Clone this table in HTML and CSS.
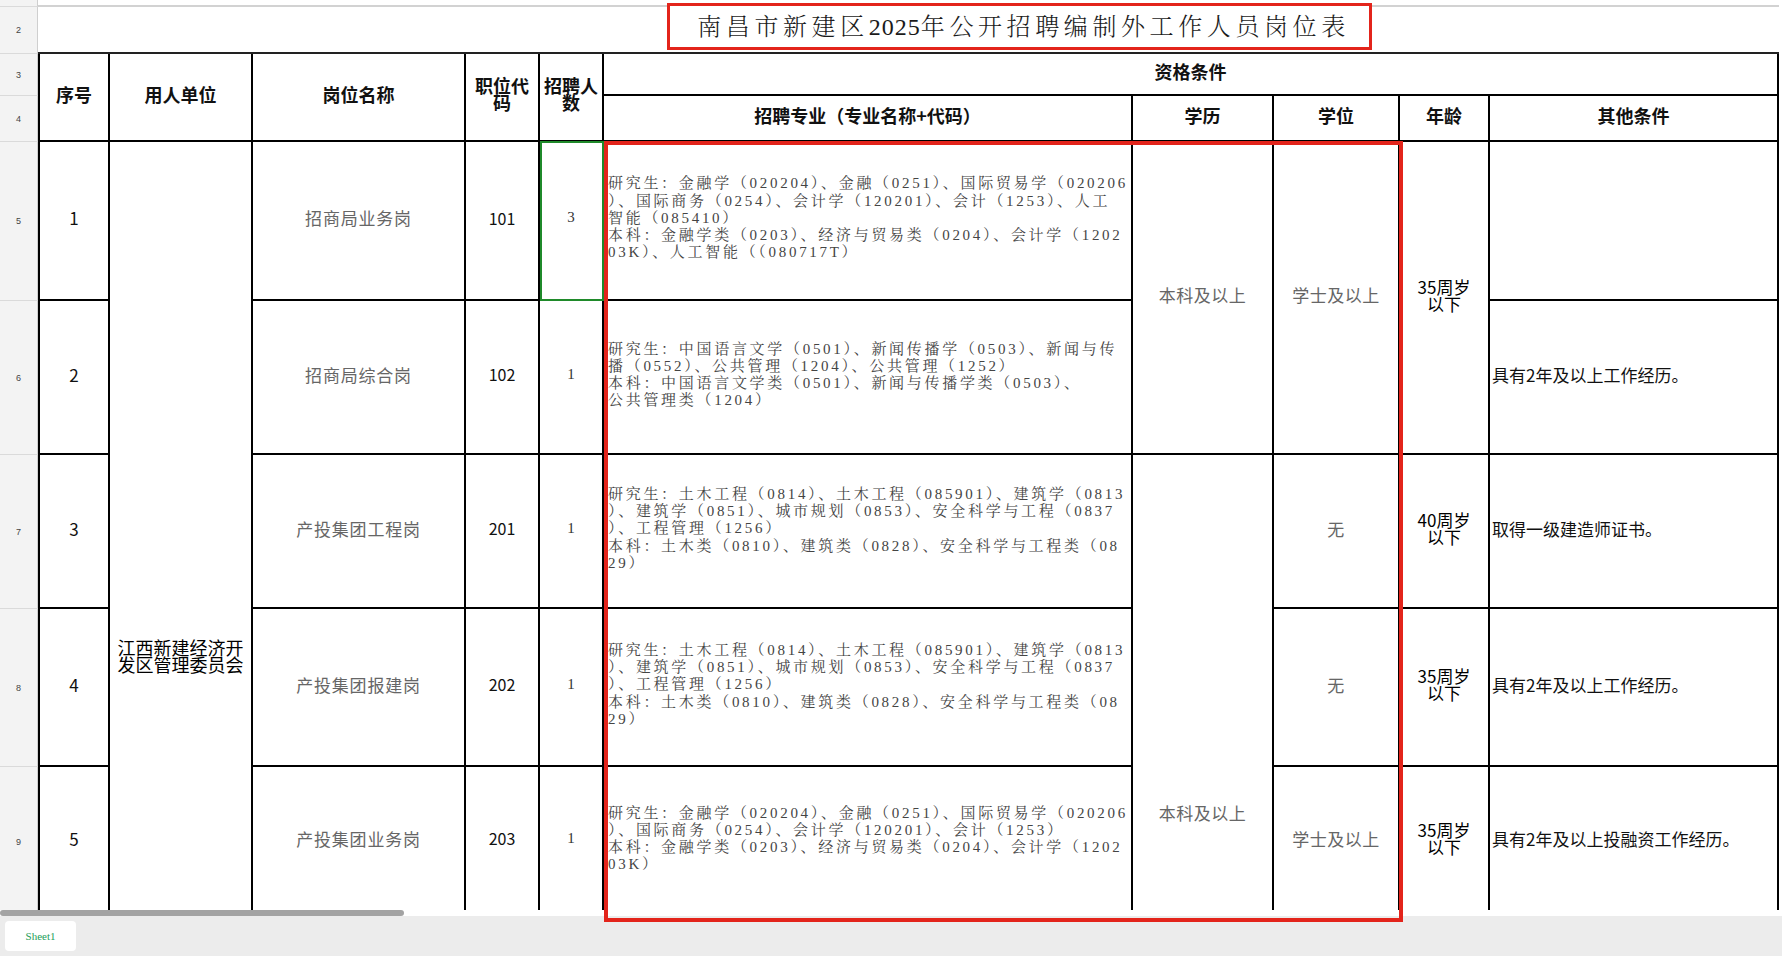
FILE: index.html
```html
<!DOCTYPE html>
<html lang="zh-CN">
<head>
<meta charset="utf-8">
<title>南昌市新建区2025年公开招聘编制外工作人员岗位表</title>
<link rel="stylesheet" href="styles.css">
</head>
<body>
<div class="app">
  <div class="sheet">
    <div class="grid">
      <div class="rh"></div>
      <div class="r1"></div>

      <div class="rh">2</div>
      <div class="title-cell">
        <div class="title-box"><span>南昌市新建区<span class="yr">2025</span>年公开招聘编制外工作人员岗位表</span></div>
      </div>

      <div class="rh">3</div>
      <div class="c hd h2 first">序号</div>
      <div class="c hd h2">用人单位</div>
      <div class="c hd h2">岗位名称</div>
      <div class="c hd h2">职位代<br>码</div>
      <div class="c hd h2">招聘人<br>数</div>
      <div class="c hd span5">资格条件</div>

      <div class="rh">4</div>
      <div class="c hd">招聘专业（专业名称+代码）</div>
      <div class="c hd">学历</div>
      <div class="c hd">学位</div>
      <div class="c hd">年龄</div>
      <div class="c hd">其他条件</div>

      <div class="rh">5</div>
      <div class="c first num">1</div>
      <div class="c unit">江西新建经济开<br>发区管理委员会</div>
      <div class="c post">招商局业务岗</div>
      <div class="c code">101</div>
      <div class="c cnt">3</div>
      <div class="c major">
        <div>研究生：金融学（020204）、金融（0251）、国际贸易学（020206</div>
        <div>）、国际商务（0254）、会计学（120201）、会计（1253）、人工</div>
        <div>智能（085410）</div>
        <div>本科：金融学类（0203）、经济与贸易类（0204）、会计学（1202</div>
        <div>03K）、人工智能（（080717T）</div>
      </div>
      <div class="c edu rs2">本科及以上</div>
      <div class="c edu rs2">学士及以上</div>
      <div class="c age rs2">35周岁<br>以下</div>
      <div class="c other"></div>

      <div class="rh">6</div>
      <div class="c first num">2</div>
      <div class="c post">招商局综合岗</div>
      <div class="c code">102</div>
      <div class="c cnt">1</div>
      <div class="c major">
        <div>研究生：中国语言文学（0501）、新闻传播学（0503）、新闻与传</div>
        <div>播（0552）、公共管理（1204）、公共管理（1252）</div>
        <div>本科：中国语言文学类（0501）、新闻与传播学类（0503）、</div>
        <div>公共管理类（1204）</div>
      </div>
      <div class="c other">具有2年及以上工作经历。</div>

      <div class="rh">7</div>
      <div class="c first num">3</div>
      <div class="c post">产投集团工程岗</div>
      <div class="c code">201</div>
      <div class="c cnt">1</div>
      <div class="c major">
        <div>研究生：土木工程（0814）、土木工程（085901）、建筑学（0813</div>
        <div>）、建筑学（0851）、城市规划（0853）、安全科学与工程（0837</div>
        <div>）、工程管理（1256）</div>
        <div>本科：土木类（0810）、建筑类（0828）、安全科学与工程类（08</div>
        <div>29）</div>
      </div>
      <div class="c edu rs3 edu-low">本科及以上</div>
      <div class="c edu">无</div>
      <div class="c age">40周岁<br>以下</div>
      <div class="c other">取得一级建造师证书。</div>

      <div class="rh">8</div>
      <div class="c first num">4</div>
      <div class="c post">产投集团报建岗</div>
      <div class="c code">202</div>
      <div class="c cnt">1</div>
      <div class="c major">
        <div>研究生：土木工程（0814）、土木工程（085901）、建筑学（0813</div>
        <div>）、建筑学（0851）、城市规划（0853）、安全科学与工程（0837</div>
        <div>）、工程管理（1256）</div>
        <div>本科：土木类（0810）、建筑类（0828）、安全科学与工程类（08</div>
        <div>29）</div>
      </div>
      <div class="c edu">无</div>
      <div class="c age">35周岁<br>以下</div>
      <div class="c other">具有2年及以上工作经历。</div>

      <div class="rh">9</div>
      <div class="c first num">5</div>
      <div class="c post">产投集团业务岗</div>
      <div class="c code">203</div>
      <div class="c cnt">1</div>
      <div class="c major">
        <div>研究生：金融学（020204）、金融（0251）、国际贸易学（020206</div>
        <div>）、国际商务（0254）、会计学（120201）、会计（1253）</div>
        <div>本科：金融学类（0203）、经济与贸易类（0204）、会计学（1202</div>
        <div>03K）</div>
      </div>
      <div class="c edu">学士及以上</div>
      <div class="c age">35周岁<br>以下</div>
      <div class="c other">具有2年及以上投融资工作经历。</div>
    </div>
    <div class="sel"></div>
  </div>
  <div class="hscroll"><div class="thumb"></div></div>
  <div class="tabs"><div class="tab">Sheet1</div></div>
  <div class="mark"></div>
</div>
</body>
</html>
```

FILE: styles.css
```css
* { box-sizing: border-box; }

body {
  margin: 0;
  background: #fff;
}

.app {
  position: relative;
  width: 1782px;
  height: 956px;
  overflow: hidden;
  background: #fff;
  font-family: "Noto Sans CJK SC", "Noto Sans", sans-serif;
}

.sheet {
  position: relative;
  height: 910px;
  overflow: hidden;
  background: #fff;
}

.grid {
  display: grid;
  width: 1779px;
  grid-template-columns: 38px 72px 143px 213px 74px 64px 529px 141px 126px 90px 289px;
  grid-template-rows: 7px 47px 42px 46px 159px 154px 154px 158px 150px;
}

.rh {
  background: #f3f3f3;
  border-right: 1px solid #cfcfcf;
  border-bottom: 1px solid #dadada;
  display: flex;
  align-items: center;
  justify-content: center;
  font: 9px "Liberation Sans", sans-serif;
  color: #444;
}

.r1 {
  grid-column: span 10;
  border-bottom: 2px solid #d2d2d2;
}

.title-cell {
  grid-column: span 10;
  border-bottom: 2px solid #222;
  padding-left: 629px;
  display: flex;
  align-items: flex-start;
}

.title-box {
  margin-top: -4px;
  width: 705px;
  height: 47px;
  border: 3.5px solid #e3241b;
  background: #fff;
  display: flex;
  align-items: center;
  justify-content: center;
  padding: 0 0 4px 8px;
  font-family: "Liberation Serif", "Noto Serif CJK SC", "Noto Sans CJK SC", serif;
  font-size: 24px;
  font-weight: 300;
  letter-spacing: 4.6px;
  color: #1a1a1a;
  white-space: nowrap;
}

.title-box .yr { letter-spacing: 1px; }

.c {
  border-right: 2px solid #000;
  border-bottom: 2px solid #000;
  display: flex;
  align-items: center;
  justify-content: center;
  text-align: center;
  overflow: hidden;
  min-width: 0;
  padding-bottom: 6px;
}

.first { border-left: 2px solid #000; }

.h2 { grid-row: span 2; }
.rs2 { grid-row: span 2; }
.rs3 { grid-row: span 3; }
.span5 { grid-column: span 5; }

.hd {
  font-size: 18px;
  font-weight: 700;
  line-height: 17px;
  color: #111;
}

.num {
  font-size: 17px;
  color: #111;
}

.unit {
  grid-row: span 5;
  align-items: flex-start;
  padding-top: 497px;
  font-size: 18px;
  line-height: 17px;
  color: #000;
}

.post {
  font-size: 17px;
  letter-spacing: 0.8px;
  color: #666;
}

.code {
  font-size: 16px;
  color: #111;
}

.cnt {
  font-family: "Liberation Serif", serif;
  font-size: 15px;
  color: #333;
}

.major {
  flex-direction: column;
  align-items: flex-start;
  justify-content: center;
  padding-left: 4px;
  padding-bottom: 4px;
  font-family: "Liberation Serif", "Noto Serif CJK SC", "Noto Sans CJK SC", serif;
  font-size: 15px;
  letter-spacing: 2.7px;
  line-height: 17.25px;
  color: #444;
  white-space: nowrap;
  text-align: left;
}

.edu {
  font-size: 17px;
  letter-spacing: 0.5px;
  color: #666;
}

.edu-low {
  align-items: flex-start;
  padding-top: 348px;
  line-height: 20px;
}

.age {
  font-size: 17px;
  line-height: 17px;
  color: #000;
}

.other {
  justify-content: flex-start;
  padding-left: 2px;
  font-size: 17px;
  color: #111;
  text-align: left;
}

.sel {
  position: absolute;
  left: 540px;
  top: 141px;
  width: 64px;
  height: 160px;
  border: 2px solid #1f8a2a;
}

.hscroll {
  height: 6px;
  background: #fff;
}

.thumb {
  width: 404px;
  height: 6px;
  border-radius: 3px;
  background: #a3a3a3;
}

.tabs {
  height: 40px;
  background: #ececec;
  padding: 5px 0 0 5px;
}

.tab {
  width: 71px;
  height: 30px;
  background: #fff;
  border-radius: 4px;
  display: flex;
  align-items: center;
  justify-content: center;
  font-family: "Liberation Serif", serif;
  font-size: 11px;
  color: #1ea05a;
}

.mark {
  position: absolute;
  left: 604px;
  top: 141px;
  width: 799px;
  height: 781px;
  border: 4px solid #e3241b;
  z-index: 5;
}
```
